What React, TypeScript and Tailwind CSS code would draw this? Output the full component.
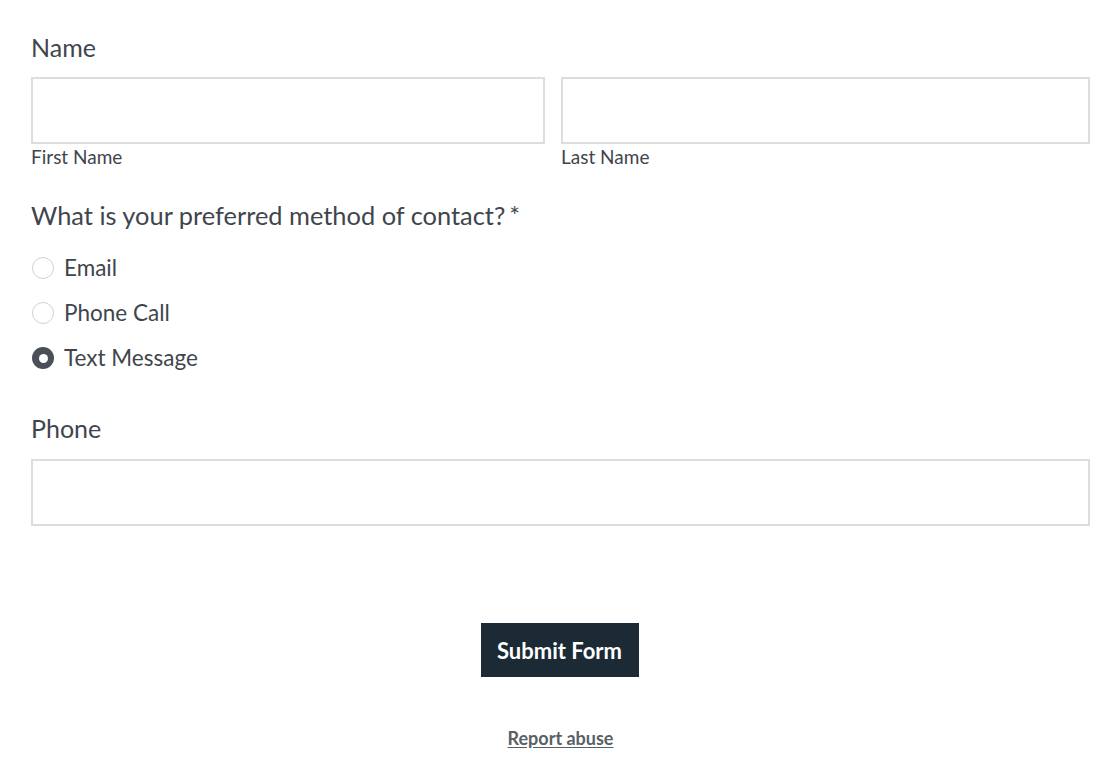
import { useState } from "react";

const options = ["Email", "Phone Call", "Text Message"];

function Radio({ checked }: { checked: boolean }) {
  return checked ? (
    <span className="flex h-[22px] w-[22px] items-center justify-center rounded-full bg-[#4a5058]">
      <span className="h-[9px] w-[9px] rounded-full bg-white" />
    </span>
  ) : (
    <span className="h-[22px] w-[22px] rounded-full border border-[#cfd2d6] bg-white" />
  );
}

export default function App() {
  const [method, setMethod] = useState("Text Message");

  return (
    <div className="min-h-screen bg-white font-['Lato','Liberation_Sans',sans-serif] text-[#3f454d]">
      <form className="pl-[31px] pr-[26px] pt-[30px]" onSubmit={(e) => e.preventDefault()}>
        <div className="text-[25px] leading-[34px]">Name</div>
        <div className="mt-[13px] flex gap-[16px]">
          <div className="w-[514px]">
            <input className="block h-[67px] w-full border-2 border-[#dcdddf] outline-none" />
            <div className="text-[19px] leading-[26px]">First Name</div>
          </div>
          <div className="flex-1">
            <input className="block h-[67px] w-full border-2 border-[#dcdddf] outline-none" />
            <div className="text-[19px] leading-[26px]">Last Name</div>
          </div>
        </div>

        <div className="mt-[28px] text-[25.4px] leading-[34px]">
          What is your preferred method of contact?<span className="ml-[4px]">*</span>
        </div>
        <div className="mt-[21px] flex flex-col gap-[15px]">
          {options.map((o) => (
            <label
              key={o}
              className="flex h-[30px] cursor-pointer items-center gap-[10px] pl-[1px] text-[22.5px]"
              onClick={() => setMethod(o)}
            >
              <Radio checked={method === o} />
              <span>{o}</span>
            </label>
          ))}
        </div>

        <div className="mt-[38px] text-[25px] leading-[34px]">Phone</div>
        <div className="mt-[14px]">
          <input className="block h-[67px] w-full border-2 border-[#dcdddf] outline-none" />
        </div>

        <div className="mt-[97px] flex justify-center">
          <button
            type="submit"
            className="-ml-[2px] h-[54px] w-[158px] bg-[#1b2a35] text-[22px] font-bold text-white"
          >
            Submit Form
          </button>
        </div>

        <div className="mt-[48px] flex justify-center">
          <a href="#" className="text-[18px] font-bold text-[#5a5f66] underline underline-offset-2">
            Report abuse
          </a>
        </div>
      </form>
    </div>
  );
}
